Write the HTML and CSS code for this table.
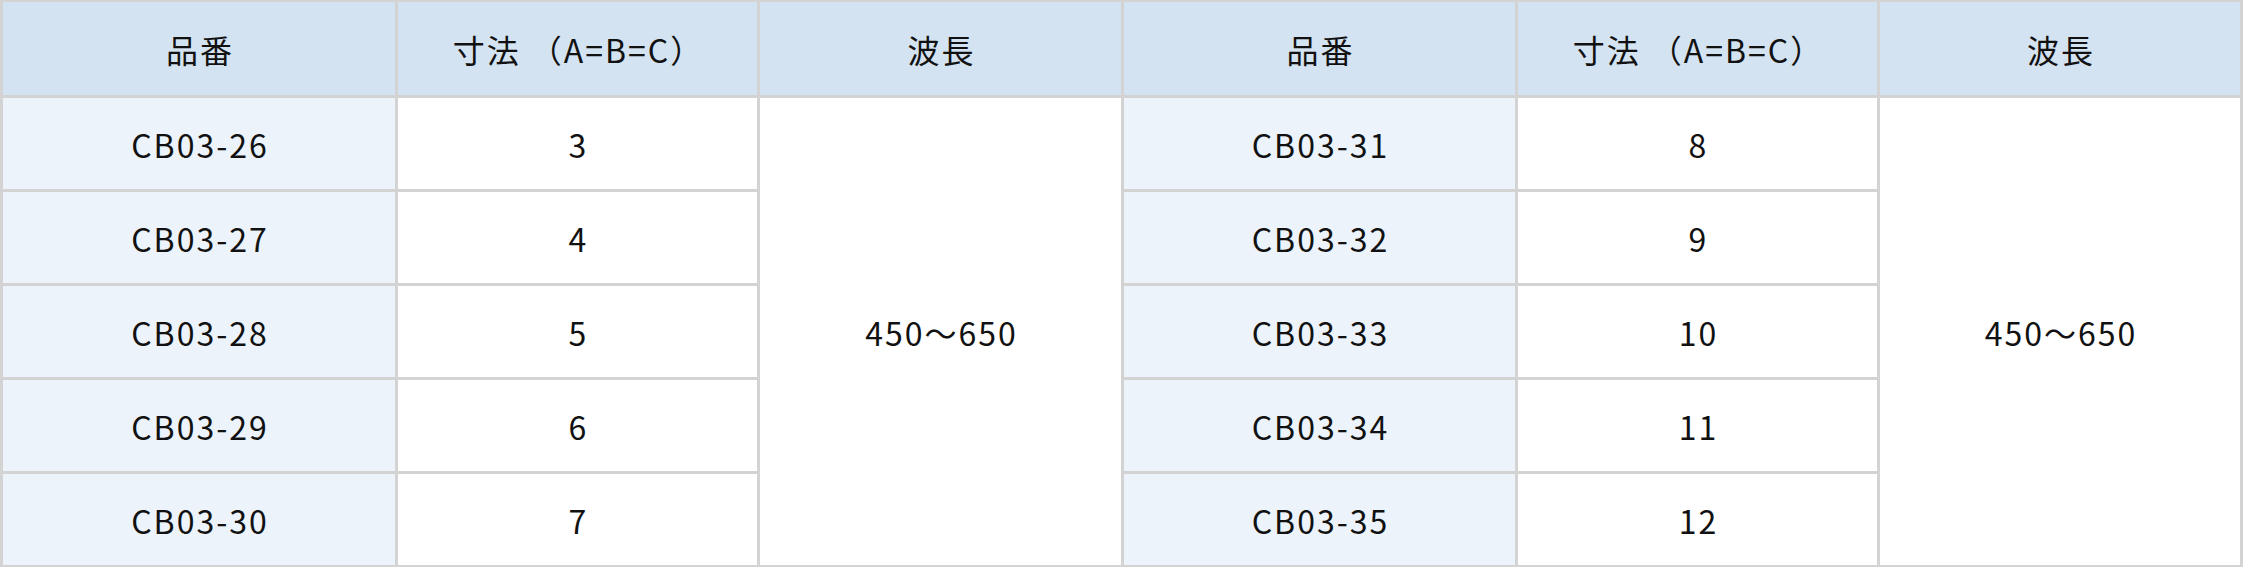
FILE: index.html
```html
<!DOCTYPE html>
<html lang="ja">
<head>
<meta charset="utf-8">
<link rel="stylesheet" href="styles.css">
</head>
<body>
<div class="spec">
  <div class="cell head">品番</div>
  <div class="cell head">寸法 （A=B=C）</div>
  <div class="cell head">波長</div>
  <div class="cell head">品番</div>
  <div class="cell head">寸法 （A=B=C）</div>
  <div class="cell head">波長</div>

  <div class="cell code r1 c1">CB03-26</div>
  <div class="cell r1 c2">3</div>
  <div class="cell wave c3">450～650</div>
  <div class="cell code r1 c4">CB03-31</div>
  <div class="cell r1 c5">8</div>
  <div class="cell wave c6">450～650</div>

  <div class="cell code c1">CB03-27</div>
  <div class="cell c2">4</div>
  <div class="cell code c4">CB03-32</div>
  <div class="cell c5">9</div>

  <div class="cell code c1">CB03-28</div>
  <div class="cell c2">5</div>
  <div class="cell code c4">CB03-33</div>
  <div class="cell c5">10</div>

  <div class="cell code c1">CB03-29</div>
  <div class="cell c2">6</div>
  <div class="cell code c4">CB03-34</div>
  <div class="cell c5">11</div>

  <div class="cell code c1">CB03-30</div>
  <div class="cell c2">7</div>
  <div class="cell code c4">CB03-35</div>
  <div class="cell c5">12</div>
</div>
</body>
</html>
```
FILE: styles.css
```css
html, body {
  margin: 0;
  padding: 0;
  background: #ffffff;
}
.spec {
  width: 2243px;
  height: 567px;
  box-sizing: border-box;
  display: grid;
  grid-template-columns: 392px 359px 361px 391px 359px 360px;
  grid-template-rows: 93px repeat(5, 91px);
  gap: 3px;
  padding: 2px 3px;
  background: #d3d3d3;
  font-family: "Noto Sans CJK JP", "Noto Sans", sans-serif;
  font-size: 32px;
  letter-spacing: 2px;
  color: #111111;
}
.cell {
  display: flex;
  align-items: center;
  justify-content: center;
  background: #ffffff;
  padding-left: 2px;
}
.head {
  background: #d4e3f1;
}
.code {
  background: #ecf3fa;
}
.c1 { grid-column: 1; }
.c2 { grid-column: 2; }
.c3 { grid-column: 3; }
.c4 { grid-column: 4; }
.c5 { grid-column: 5; }
.c6 { grid-column: 6; }
.wave {
  grid-row: 2 / span 5;
}
.r1 { grid-row: 2; }
```
